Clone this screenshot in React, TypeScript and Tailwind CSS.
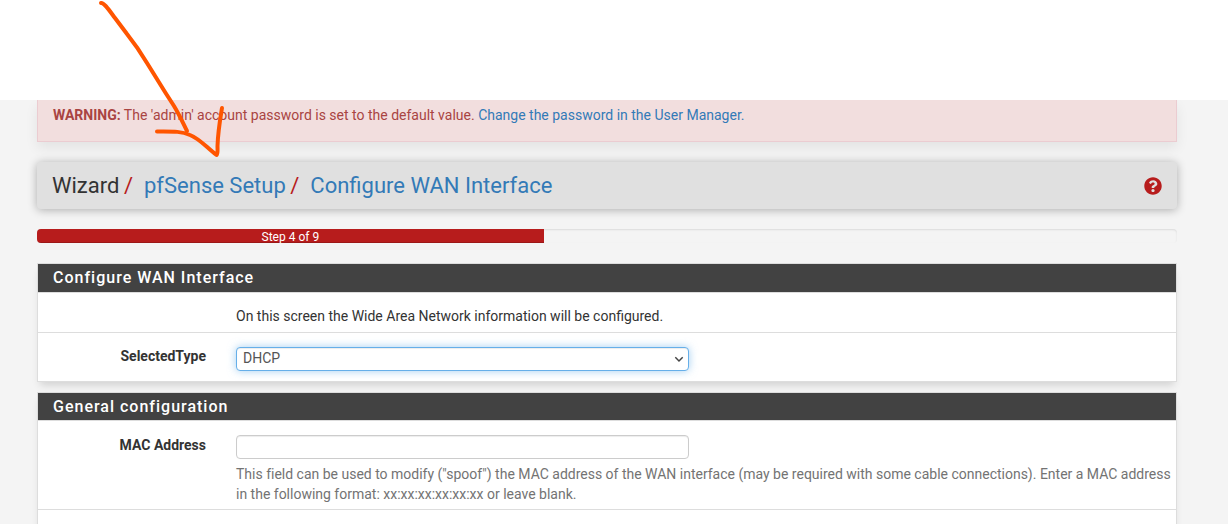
import type { ReactNode } from 'react';

interface PanelProps {
  title: string;
  children: ReactNode;
  className: string;
  headingClassName: string;
}

function Panel({ title, children, className, headingClassName }: PanelProps) {
  return (
    <section className={`border border-[#ddd] bg-white shadow-[0_6px_8px_-3px_rgba(0,0,0,0.15)] ${className}`}>
      <h2
        className={`border-b border-[#ddd] bg-[#424242] pl-[15px] text-base leading-[27px] font-medium tracking-[1px] text-white ${headingClassName}`}
      >
        {title}
      </h2>
      {children}
    </section>
  );
}

function Row({ label, children, className }: { label?: string; children: ReactNode; className: string }) {
  return (
    <div className={`flex border-[#ddd] ${className}`}>
      <div className="w-[168px] shrink-0 text-right font-bold">{label}</div>
      <div className="ml-[30px] min-w-0 flex-1">{children}</div>
    </div>
  );
}

function HandDrawnArrow() {
  return (
    <svg
      className="pointer-events-none absolute top-0 left-0 z-20"
      width="240"
      height="170"
      viewBox="0 0 240 170"
      fill="none"
      stroke="#ff5500"
      strokeWidth="4"
      strokeLinecap="round"
      strokeLinejoin="round"
    >
      <path d="M101 3C104 2.500 109 10 115 18L127 34C135 44 141 53 147 63L165 92L174 106C180 116 183 123 187 131" />
      <path d="M157 131.500C172 131.500 181 131 190 135C200 139 206 147 216.500 155C218 154 217.500 150 217.500 146C218 131 220 120 222 108" />
    </svg>
  );
}

export default function App() {
  return (
    <div className="relative flex h-[524px] w-[1228px] flex-col overflow-hidden bg-[#f4f4f4] font-['Roboto',sans-serif] text-sm leading-5 text-[#333]">
      <div className="z-10 h-[100px] shrink-0 bg-white" />
      <main className="ml-[37px] w-[1140px]">
        <div className="h-[42px] border border-t-0 border-[#ebccd1] bg-[#f2dede] pt-[5px] pl-[15px] text-[#a94442] shadow-[0_6px_12px_rgba(0,0,0,0.07)]">
          <strong>WARNING:</strong> The 'admin' account password is set to the default value.{' '}
          <a className="text-[#337ab7]">Change the password in the User Manager.</a>
        </div>

        <header className="mt-5 flex h-[47px] items-center justify-between rounded-[4px] bg-[#e0e0e0] pr-[15px] pl-[15px] text-[22px] shadow-[0_1px_10px_rgba(0,0,0,0.3)]">
          <nav className="flex leading-6">
            <span>Wizard</span>
            <span className="pr-[11px] pl-[4.500px] text-[#b71c1c]">/</span>
            <a className="text-[#337ab7]">pfSense Setup</a>
            <span className="pr-[11px] pl-[4.500px] text-[#b71c1c]">/</span>
            <a className="text-[#337ab7]">Configure WAN Interface</a>
          </nav>
          <svg className="mt-px" width="18" height="18" viewBox="0 0 512 512" fill="#b71c1c" role="img" aria-label="Help">
            <path d="M504 256c0 136.997-111.043 248-248 248S8 392.997 8 256C8 119.083 119.043 8 256 8s248 111.083 248 248zM262.655 90c-54.497 0-89.255 22.957-116.549 63.758-3.536 5.286-2.353 12.415 2.715 16.258l34.699 26.310c5.205 3.947 12.621 3.008 16.665-2.122 17.864-22.658 30.113-35.797 57.303-35.797 20.429 0 45.698 13.148 45.698 32.958 0 14.976-12.363 22.667-32.534 33.976C247.128 238.528 216 254.941 216 296v4c0 6.627 5.373 12 12 12h56c6.627 0 12-5.373 12-12v-1.333c0-28.462 83.186-29.647 83.186-106.667 0-58.002-60.165-102-116.531-102zM256 338c-25.365 0-46 20.635-46 46 0 25.364 20.635 46 46 46s46-20.636 46-46c0-25.365-20.635-46-46-46z" />
          </svg>
        </header>

        <div className="mt-5 flex h-[14px] overflow-hidden rounded-[4px] bg-[#f4f4f4] shadow-[inset_0_1px_2px_rgba(0,0,0,0.1)]">
          <div className="w-[44.45%] bg-[#b71c1c] text-center text-xs leading-4 text-white shadow-[inset_0_-1px_0_rgba(0,0,0,0.15)]">
            Step 4 of 9
          </div>
        </div>

        <Panel title="Configure WAN Interface" className="mt-5 h-[119px]" headingClassName="h-[29px]">
          <Row className="h-10 border-b">
            <p className="pt-[13px]">On this screen the Wide Area Network information will be configured.</p>
          </Row>
          <Row label="SelectedType" className="h-12 pt-[13px]">
            <button className="mt-px flex h-6 w-[453px] items-center justify-between rounded-[4px] border border-[#66afe9] bg-white pr-1 pl-1.5 text-[#555] shadow-[inset_0_1px_1px_rgba(0,0,0,0.075),0_0_8px_rgba(102,175,233,0.6)]">
              <span className="-mt-0.5">DHCP</span>
              <svg className="-mt-px" width="10" height="8" viewBox="0 0 10 8" fill="none" stroke="#444" strokeWidth="1.5">
                <path d="M1.300 2.300L5 6L8.700 2.300" />
              </svg>
            </button>
          </Row>
        </Panel>

        <Panel title="General configuration" className="mt-[10px] h-[160px]" headingClassName="h-[28px]">
          <Row label="MAC Address" className="h-[89px] border-b pt-[14px]">
            <input
              aria-label="MAC Address"
              className="block h-6 w-[453px] rounded-[4px] border border-[#ccc] bg-white px-1.5 shadow-[inset_0_1px_1px_rgba(0,0,0,0.075)] outline-none"
            />
            <p className="mt-[5px] tracking-[-0.004px] whitespace-nowrap text-[#737373]">
              This field can be used to modify ("spoof") the MAC address of the WAN interface (may be required with some cable connections). Enter a MAC address
              <br />
              in the following format: xx:xx:xx:xx:xx:xx or leave blank.
            </p>
          </Row>
        </Panel>
      </main>
      <HandDrawnArrow />
    </div>
  );
}
